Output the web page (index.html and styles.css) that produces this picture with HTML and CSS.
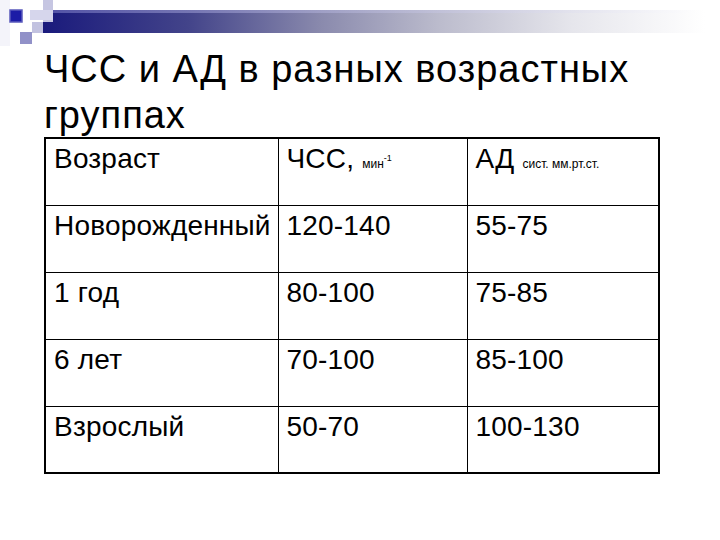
FILE: index.html
```html
<!DOCTYPE html>
<html lang="ru">
<head>
<meta charset="utf-8">
<title>ЧСС и АД в разных возрастных группах</title>
<link rel="stylesheet" href="styles.css">
</head>
<body>
<div class="slide">
  <svg class="deco" width="720" height="46" viewBox="0 0 720 46" aria-hidden="true">
    <defs>
      <linearGradient id="barGrad" x1="43" y1="0" x2="705" y2="0" gradientUnits="userSpaceOnUse">
        <stop offset="0" stop-color="#1a1a7c"/>
        <stop offset="0.22" stop-color="#43448a"/>
        <stop offset="0.42" stop-color="#8a8aad"/>
        <stop offset="0.6" stop-color="#bcbccd"/>
        <stop offset="0.8" stop-color="#e6e6ec"/>
        <stop offset="1" stop-color="#ffffff"/>
      </linearGradient>
      <linearGradient id="topGrad" x1="43" y1="0" x2="705" y2="0" gradientUnits="userSpaceOnUse">
        <stop offset="0" stop-color="#6a6ab8"/>
        <stop offset="0.5" stop-color="#b4b4d4"/>
        <stop offset="1" stop-color="#ffffff"/>
      </linearGradient>
    </defs>
    <rect x="0" y="0" width="10" height="46" fill="#f4f4fa"/>
    <rect x="43" y="10" width="662" height="23" fill="url(#barGrad)"/>
    <rect x="43" y="10" width="662" height="3" fill="url(#topGrad)" opacity="0.7"/>
    <rect x="43" y="0" width="10" height="22" fill="#c6c6e2"/>
    <rect x="30" y="10" width="23" height="10" fill="#d6d6ec"/>
    <rect x="32" y="22" width="11" height="11" fill="#c2c2e0"/>
    <rect x="20" y="32" width="12" height="12" fill="#9191c8"/>
    <rect x="10" y="10" width="12" height="12" fill="#1c1ca6" stroke="#5a5abc" stroke-width="1.5"/>
  </svg>

  <h1 class="title">ЧСС и АД в разных возрастных группах</h1>

  <table class="data">
    <colgroup>
      <col class="c1">
      <col class="c2">
      <col class="c3">
    </colgroup>
    <tr>
      <td>Возраст</td>
      <td>ЧСС, <span class="small">мин<sup>-1</sup></span></td>
      <td>АД <span class="small">сист. мм.рт.ст.</span></td>
    </tr>
    <tr>
      <td>Новорожденный</td>
      <td>120-140</td>
      <td>55-75</td>
    </tr>
    <tr>
      <td>1 год</td>
      <td>80-100</td>
      <td>75-85</td>
    </tr>
    <tr>
      <td>6 лет</td>
      <td>70-100</td>
      <td>85-100</td>
    </tr>
    <tr>
      <td>Взрослый</td>
      <td>50-70</td>
      <td>100-130</td>
    </tr>
  </table>
</div>
</body>
</html>
```

FILE: styles.css
```css
html, body {
  margin: 0;
  padding: 0;
  background: #ffffff;
}

.slide {
  width: 720px;
  height: 540px;
  overflow: hidden;
  font-family: "Liberation Sans", Arial, sans-serif;
  color: #000000;
}

.deco {
  display: block;
}

.title {
  margin: 0 0 0 44px;
  width: 640px;
  font-weight: normal;
  font-size: 38px;
  letter-spacing: 1px;
  line-height: 46px;
  height: 91px;
  margin-top: 0;
}

.data {
  margin-left: 44px;
  border-collapse: collapse;
  border: 2px solid #000000;
  width: 614px;
  table-layout: fixed;
}

.c1 { width: 233px; }
.c2 { width: 189px; }
.c3 { width: 192px; }

.data td {
  border: 1px solid #000000;
  height: 67px;
  padding: 5px 0 0 8px;
  vertical-align: top;
  font-size: 28px;
  letter-spacing: 0.2px;
  line-height: 30px;
  box-sizing: border-box;
  white-space: nowrap;
}

.small {
  font-size: 12px;
  letter-spacing: 0;
}

.small sup {
  font-size: 9px;
  vertical-align: 7px;
  line-height: 0;
}
```
